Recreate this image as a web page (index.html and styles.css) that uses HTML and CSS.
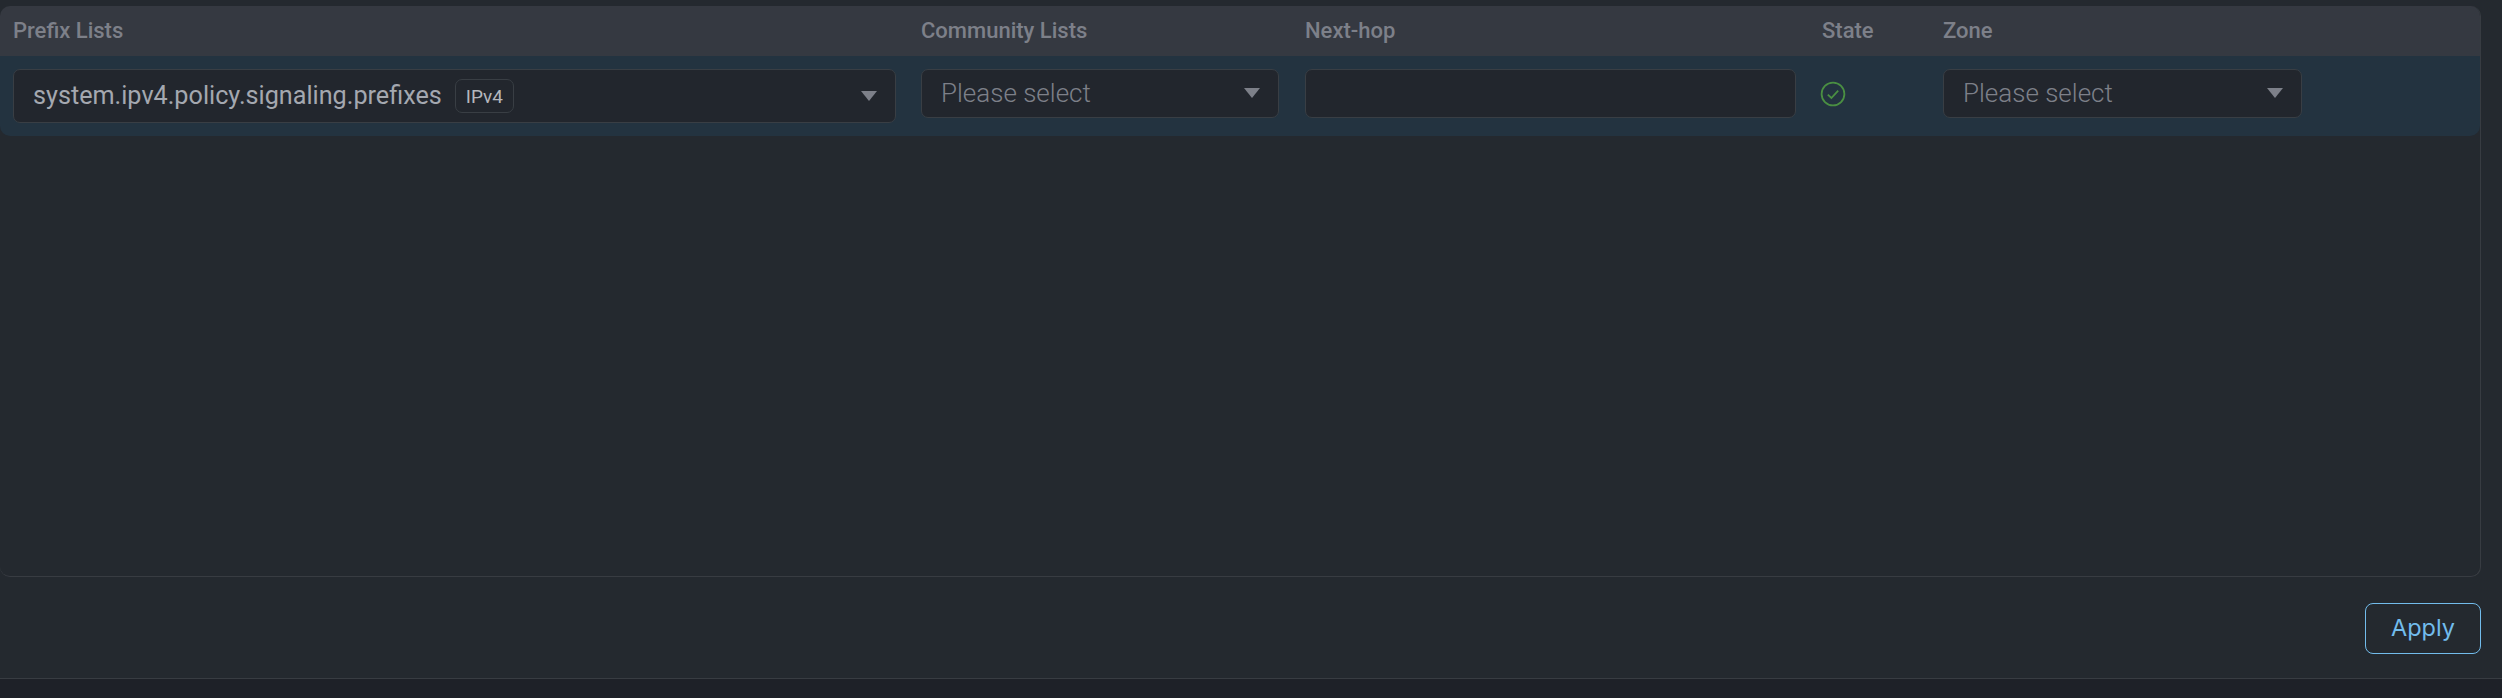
FILE: index.html
```html
<!DOCTYPE html>
<html lang="en">
<head>
<meta charset="utf-8">
<title>Prefix Lists</title>
<link rel="stylesheet" href="styles.css">
</head>
<body>
<main class="panel">
  <section class="table">
    <div class="cols head">
      <div>Prefix Lists</div>
      <div>Community Lists</div>
      <div>Next-hop</div>
      <div>State</div>
      <div>Zone</div>
    </div>
    <div class="cols row">
      <div class="select tall">
        <span class="value">system.ipv4.policy.signaling.prefixes</span>
        <span class="tag">IPv4</span>
        <span class="caret"></span>
      </div>
      <div class="select">
        <span class="placeholder">Please select</span>
        <span class="caret"></span>
      </div>
      <div class="input"></div>
      <div class="state">
        <svg width="26" height="26" viewBox="0 0 26 26" fill="none" stroke="#4a8f42" aria-hidden="true">
          <circle cx="13" cy="13" r="11.4" stroke-width="1.8"/>
          <path d="M7.8 13.6l3.6 3.4 6.8-7.4" stroke-width="1.8"/>
        </svg>
      </div>
      <div class="select">
        <span class="placeholder">Please select</span>
        <span class="caret"></span>
      </div>
    </div>
  </section>
  <footer class="actions">
    <button class="apply" type="button">Apply</button>
  </footer>
</main>
</body>
</html>
```
FILE: styles.css
```css
* { box-sizing: border-box; }
html, body { margin: 0; height: 100%; }
body {
  background: #1e2128;
  font-family: Roboto, "Liberation Sans", sans-serif;
  overflow: hidden;
}
.panel {
  height: 679px;
  background: #24292f;
  border-bottom: 1px solid #383c42;
  padding: 6px 21px 0 0;
}
.table {
  height: 571px;
  border: 1px solid #383c42;
  border-top: 0;
  border-left: 0;
  border-radius: 10px;
  overflow: hidden;
}
.cols {
  display: grid;
  grid-template-columns: 882px 358px 491px 95px 359px;
  column-gap: 26px;
  padding-left: 13px;
}
.head {
  height: 50px;
  align-items: center;
  background: #353941;
  color: #7d8089;
  font-size: 22px;
  font-weight: 500;
  padding-bottom: 2px;
}
.row {
  height: 80px;
  background: #233340;
  padding-top: 13px;
  align-items: start;
  border-radius: 0 0 10px 10px;
}
.select, .input {
  height: 49px;
  background: #22262d;
  border: 1px solid #393e44;
  border-radius: 7px;
}
.select {
  display: flex;
  align-items: center;
  padding: 0 18px 2px 19px;
}
.tall {
  height: 54px;
  margin-right: -1px;
  padding-bottom: 0;
}
.value {
  font-size: 25.2px;
  font-weight: 400;
  color: #a4a8b0;
  padding-bottom: 2px;
}
.placeholder {
  font-size: 26px;
  font-weight: 300;
  color: #7d8089;
}
.tag {
  margin-left: 13px;
  height: 34px;
  padding: 0 10px;
  display: flex;
  align-items: center;
  font-size: 19px;
  color: #b4b7bd;
  border: 1px solid #393e44;
  border-radius: 7px;
}
.caret {
  margin-left: auto;
  width: 0;
  height: 0;
  border-left: 8px solid transparent;
  border-right: 8px solid transparent;
  border-top: 10px solid #7d8089;
}
.state {
  height: 49px;
  display: flex;
  align-items: center;
  margin-left: -2px;
}
.actions {
  display: flex;
  justify-content: flex-end;
  padding-top: 26px;
}
.apply {
  width: 116px;
  height: 51px;
  padding: 0 0 2px;
  background: transparent;
  border: 1px solid #72bcec;
  border-radius: 8px;
  color: #72bcec;
  font-family: Inter, Roboto, sans-serif;
  font-size: 23.5px;
  font-weight: 400;
}
```
